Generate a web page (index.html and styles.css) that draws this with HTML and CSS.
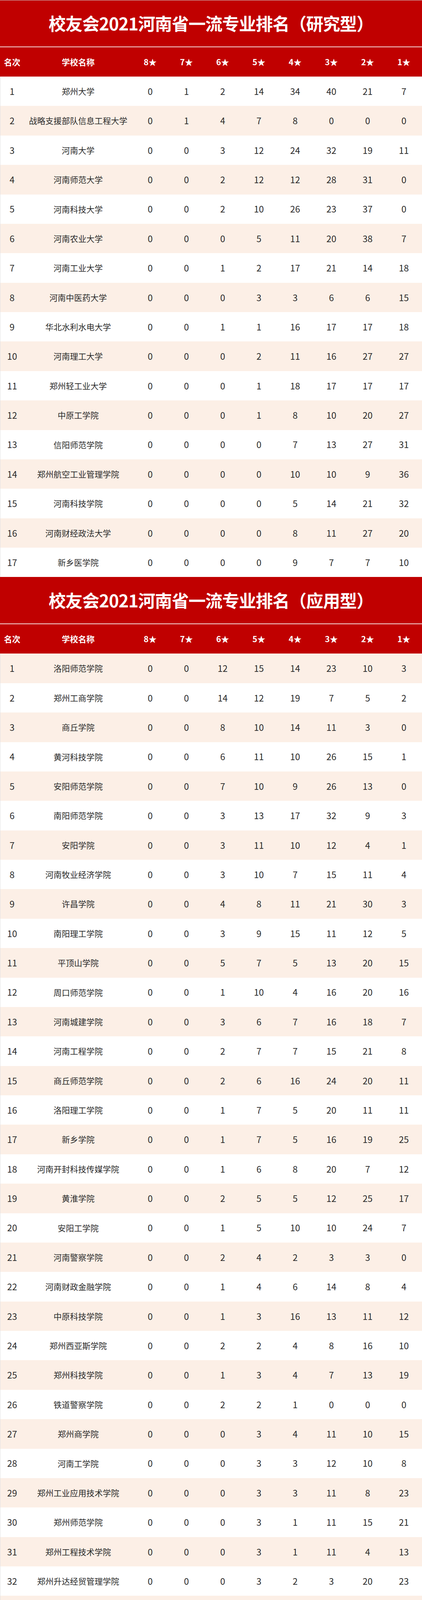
FILE: index.html
```html
<!DOCTYPE html>
<html lang="zh-CN">
<head>
<meta charset="utf-8">
<title>校友会2021河南省一流专业排名</title>
<link rel="stylesheet" href="styles.css">
</head>
<body>
<section class="board first">
  <h1 class="title">校友会2021河南省一流专业排名（研究型）</h1>
  <div class="row head"><span>名次</span><span>学校名称</span><span>8★</span><span>7★</span><span>6★</span><span>5★</span><span>4★</span><span>3★</span><span>2★</span><span>1★</span></div>
  <div class="rows even-shade">
    <div class="row"><span>1</span><span>郑州大学</span><span>0</span><span>1</span><span>2</span><span>14</span><span>34</span><span>40</span><span>21</span><span>7</span></div>
    <div class="row"><span>2</span><span>战略支援部队信息工程大学</span><span>0</span><span>1</span><span>4</span><span>7</span><span>8</span><span>0</span><span>0</span><span>0</span></div>
    <div class="row"><span>3</span><span>河南大学</span><span>0</span><span>0</span><span>3</span><span>12</span><span>24</span><span>32</span><span>19</span><span>11</span></div>
    <div class="row"><span>4</span><span>河南师范大学</span><span>0</span><span>0</span><span>2</span><span>12</span><span>12</span><span>28</span><span>31</span><span>0</span></div>
    <div class="row"><span>5</span><span>河南科技大学</span><span>0</span><span>0</span><span>2</span><span>10</span><span>26</span><span>23</span><span>37</span><span>0</span></div>
    <div class="row"><span>6</span><span>河南农业大学</span><span>0</span><span>0</span><span>0</span><span>5</span><span>11</span><span>20</span><span>38</span><span>7</span></div>
    <div class="row"><span>7</span><span>河南工业大学</span><span>0</span><span>0</span><span>1</span><span>2</span><span>17</span><span>21</span><span>14</span><span>18</span></div>
    <div class="row"><span>8</span><span>河南中医药大学</span><span>0</span><span>0</span><span>0</span><span>3</span><span>3</span><span>6</span><span>6</span><span>15</span></div>
    <div class="row"><span>9</span><span>华北水利水电大学</span><span>0</span><span>0</span><span>1</span><span>1</span><span>16</span><span>17</span><span>17</span><span>18</span></div>
    <div class="row"><span>10</span><span>河南理工大学</span><span>0</span><span>0</span><span>0</span><span>2</span><span>11</span><span>16</span><span>27</span><span>27</span></div>
    <div class="row"><span>11</span><span>郑州轻工业大学</span><span>0</span><span>0</span><span>0</span><span>1</span><span>18</span><span>17</span><span>17</span><span>17</span></div>
    <div class="row"><span>12</span><span>中原工学院</span><span>0</span><span>0</span><span>0</span><span>1</span><span>8</span><span>10</span><span>20</span><span>27</span></div>
    <div class="row"><span>13</span><span>信阳师范学院</span><span>0</span><span>0</span><span>0</span><span>0</span><span>7</span><span>13</span><span>27</span><span>31</span></div>
    <div class="row"><span>14</span><span>郑州航空工业管理学院</span><span>0</span><span>0</span><span>0</span><span>0</span><span>10</span><span>10</span><span>9</span><span>36</span></div>
    <div class="row"><span>15</span><span>河南科技学院</span><span>0</span><span>0</span><span>0</span><span>0</span><span>5</span><span>14</span><span>21</span><span>32</span></div>
    <div class="row"><span>16</span><span>河南财经政法大学</span><span>0</span><span>0</span><span>0</span><span>0</span><span>8</span><span>11</span><span>27</span><span>20</span></div>
    <div class="row"><span>17</span><span>新乡医学院</span><span>0</span><span>0</span><span>0</span><span>0</span><span>9</span><span>7</span><span>7</span><span>10</span></div>
  </div>
</section>
<section class="board">
  <h1 class="title">校友会2021河南省一流专业排名（应用型）</h1>
  <div class="row head"><span>名次</span><span>学校名称</span><span>8★</span><span>7★</span><span>6★</span><span>5★</span><span>4★</span><span>3★</span><span>2★</span><span>1★</span></div>
  <div class="rows odd-shade">
    <div class="row"><span>1</span><span>洛阳师范学院</span><span>0</span><span>0</span><span>12</span><span>15</span><span>14</span><span>23</span><span>10</span><span>3</span></div>
    <div class="row"><span>2</span><span>郑州工商学院</span><span>0</span><span>0</span><span>14</span><span>12</span><span>19</span><span>7</span><span>5</span><span>2</span></div>
    <div class="row"><span>3</span><span>商丘学院</span><span>0</span><span>0</span><span>8</span><span>10</span><span>14</span><span>11</span><span>3</span><span>0</span></div>
    <div class="row"><span>4</span><span>黄河科技学院</span><span>0</span><span>0</span><span>6</span><span>11</span><span>10</span><span>26</span><span>15</span><span>1</span></div>
    <div class="row"><span>5</span><span>安阳师范学院</span><span>0</span><span>0</span><span>7</span><span>10</span><span>9</span><span>26</span><span>13</span><span>0</span></div>
    <div class="row"><span>6</span><span>南阳师范学院</span><span>0</span><span>0</span><span>3</span><span>13</span><span>17</span><span>32</span><span>9</span><span>3</span></div>
    <div class="row"><span>7</span><span>安阳学院</span><span>0</span><span>0</span><span>3</span><span>11</span><span>10</span><span>12</span><span>4</span><span>1</span></div>
    <div class="row"><span>8</span><span>河南牧业经济学院</span><span>0</span><span>0</span><span>3</span><span>10</span><span>7</span><span>15</span><span>11</span><span>4</span></div>
    <div class="row"><span>9</span><span>许昌学院</span><span>0</span><span>0</span><span>4</span><span>8</span><span>11</span><span>21</span><span>30</span><span>3</span></div>
    <div class="row"><span>10</span><span>南阳理工学院</span><span>0</span><span>0</span><span>3</span><span>9</span><span>15</span><span>11</span><span>12</span><span>5</span></div>
    <div class="row"><span>11</span><span>平顶山学院</span><span>0</span><span>0</span><span>5</span><span>7</span><span>5</span><span>13</span><span>20</span><span>15</span></div>
    <div class="row"><span>12</span><span>周口师范学院</span><span>0</span><span>0</span><span>1</span><span>10</span><span>4</span><span>16</span><span>20</span><span>16</span></div>
    <div class="row"><span>13</span><span>河南城建学院</span><span>0</span><span>0</span><span>3</span><span>6</span><span>7</span><span>16</span><span>18</span><span>7</span></div>
    <div class="row"><span>14</span><span>河南工程学院</span><span>0</span><span>0</span><span>2</span><span>7</span><span>7</span><span>15</span><span>21</span><span>8</span></div>
    <div class="row"><span>15</span><span>商丘师范学院</span><span>0</span><span>0</span><span>2</span><span>6</span><span>16</span><span>24</span><span>20</span><span>11</span></div>
    <div class="row"><span>16</span><span>洛阳理工学院</span><span>0</span><span>0</span><span>1</span><span>7</span><span>5</span><span>20</span><span>11</span><span>11</span></div>
    <div class="row"><span>17</span><span>新乡学院</span><span>0</span><span>0</span><span>1</span><span>7</span><span>5</span><span>16</span><span>19</span><span>25</span></div>
    <div class="row"><span>18</span><span>河南开封科技传媒学院</span><span>0</span><span>0</span><span>1</span><span>6</span><span>8</span><span>20</span><span>7</span><span>12</span></div>
    <div class="row"><span>19</span><span>黄淮学院</span><span>0</span><span>0</span><span>2</span><span>5</span><span>5</span><span>12</span><span>25</span><span>17</span></div>
    <div class="row"><span>20</span><span>安阳工学院</span><span>0</span><span>0</span><span>1</span><span>5</span><span>10</span><span>10</span><span>24</span><span>7</span></div>
    <div class="row"><span>21</span><span>河南警察学院</span><span>0</span><span>0</span><span>2</span><span>4</span><span>2</span><span>3</span><span>3</span><span>0</span></div>
    <div class="row"><span>22</span><span>河南财政金融学院</span><span>0</span><span>0</span><span>1</span><span>4</span><span>6</span><span>14</span><span>8</span><span>4</span></div>
    <div class="row"><span>23</span><span>中原科技学院</span><span>0</span><span>0</span><span>1</span><span>3</span><span>16</span><span>13</span><span>11</span><span>12</span></div>
    <div class="row"><span>24</span><span>郑州西亚斯学院</span><span>0</span><span>0</span><span>2</span><span>2</span><span>4</span><span>8</span><span>16</span><span>10</span></div>
    <div class="row"><span>25</span><span>郑州科技学院</span><span>0</span><span>0</span><span>1</span><span>3</span><span>4</span><span>7</span><span>13</span><span>19</span></div>
    <div class="row"><span>26</span><span>铁道警察学院</span><span>0</span><span>0</span><span>2</span><span>2</span><span>1</span><span>0</span><span>0</span><span>0</span></div>
    <div class="row"><span>27</span><span>郑州商学院</span><span>0</span><span>0</span><span>0</span><span>3</span><span>4</span><span>11</span><span>10</span><span>15</span></div>
    <div class="row"><span>28</span><span>河南工学院</span><span>0</span><span>0</span><span>0</span><span>3</span><span>3</span><span>12</span><span>10</span><span>8</span></div>
    <div class="row"><span>29</span><span>郑州工业应用技术学院</span><span>0</span><span>0</span><span>0</span><span>3</span><span>3</span><span>11</span><span>8</span><span>23</span></div>
    <div class="row"><span>30</span><span>郑州师范学院</span><span>0</span><span>0</span><span>0</span><span>3</span><span>1</span><span>11</span><span>15</span><span>21</span></div>
    <div class="row"><span>31</span><span>郑州工程技术学院</span><span>0</span><span>0</span><span>0</span><span>3</span><span>1</span><span>11</span><span>4</span><span>13</span></div>
    <div class="row"><span>32</span><span>郑州升达经贸管理学院</span><span>0</span><span>0</span><span>0</span><span>3</span><span>2</span><span>3</span><span>20</span><span>23</span></div>
    <div class="row"><span>33</span><span>信阳农林学院</span><span>0</span><span>0</span><span>0</span><span>2</span><span>3</span><span>14</span><span>11</span><span>10</span></div>
    <div class="row"><span>34</span><span>商丘工学院</span><span>0</span><span>0</span><span>0</span><span>1</span><span>3</span><span>8</span><span>8</span><span>16</span></div>
    <div class="row"><span>35</span><span>黄河交通学院</span><span>0</span><span>0</span><span>0</span><span>1</span><span>2</span><span>9</span><span>3</span><span>18</span></div>
    <div class="row"><span>36</span><span>郑州经贸学院</span><span>0</span><span>0</span><span>0</span><span>0</span><span>5</span><span>16</span><span>13</span><span>9</span></div>
    <div class="row"><span>37</span><span>信阳学院</span><span>0</span><span>0</span><span>0</span><span>0</span><span>3</span><span>12</span><span>17</span><span>23</span></div>
    <div class="row"><span>38</span><span>郑州财经学院</span><span>0</span><span>0</span><span>0</span><span>0</span><span>2</span><span>9</span><span>2</span><span>23</span></div>
    <div class="row"><span>39</span><span>新乡医学院三全学院</span><span>0</span><span>0</span><span>0</span><span>0</span><span>2</span><span>7</span><span>12</span><span>5</span></div>
    <div class="row"><span>40</span><span>河南科技学院新科学院</span><span>0</span><span>0</span><span>0</span><span>0</span><span>0</span><span>8</span><span>10</span><span>17</span></div>
  </div>
</section>
</body>
</html>
```

FILE: styles.css
```css
html, body {
  margin: 0;
  padding: 0;
  background: #ffffff;
}

html {
  height: 4689px;
  overflow: hidden;
}

body {
  width: 1080px;
  height: 4689px;
  overflow: hidden;
  font-family: "Noto Sans CJK SC", "Noto Sans", sans-serif;
  color: #2b2b2b;
}

.board {
  display: block;
}

.title {
  box-sizing: border-box;
  margin: 0;
  height: 121px;
  background: #c00000;
  color: #ffffff;
  font-size: 44px;
  font-weight: 700;
  line-height: 119px;
  text-align: center;
  letter-spacing: -1px;
  border-bottom: 2px solid #f4dada;
  overflow: hidden;
}

.first .title {
  border-top: 1px solid #cfcfcf;
  line-height: 117px;
}

.row {
  box-sizing: border-box;
  display: grid;
  grid-template-columns: 62px 276px repeat(8, 1fr);
  align-items: center;
  height: 75.38px;
  font-size: 23px;
  line-height: 1.2;
  text-align: center;
  white-space: nowrap;
  overflow: hidden;
}

.row span {
  display: block;
}

.row span:nth-child(2) {
  font-size: 21px;
}

.rows .row {
  box-shadow: inset 1px 0 0 #e2e2e2;
}

.head {
  height: 75px;
  background: #c00000;
  color: #ffffff;
  font-size: 21px;
  font-weight: 700;
}

.even-shade .row:nth-child(even),
.odd-shade .row:nth-child(odd) {
  background: #fcefe6;
}
```
